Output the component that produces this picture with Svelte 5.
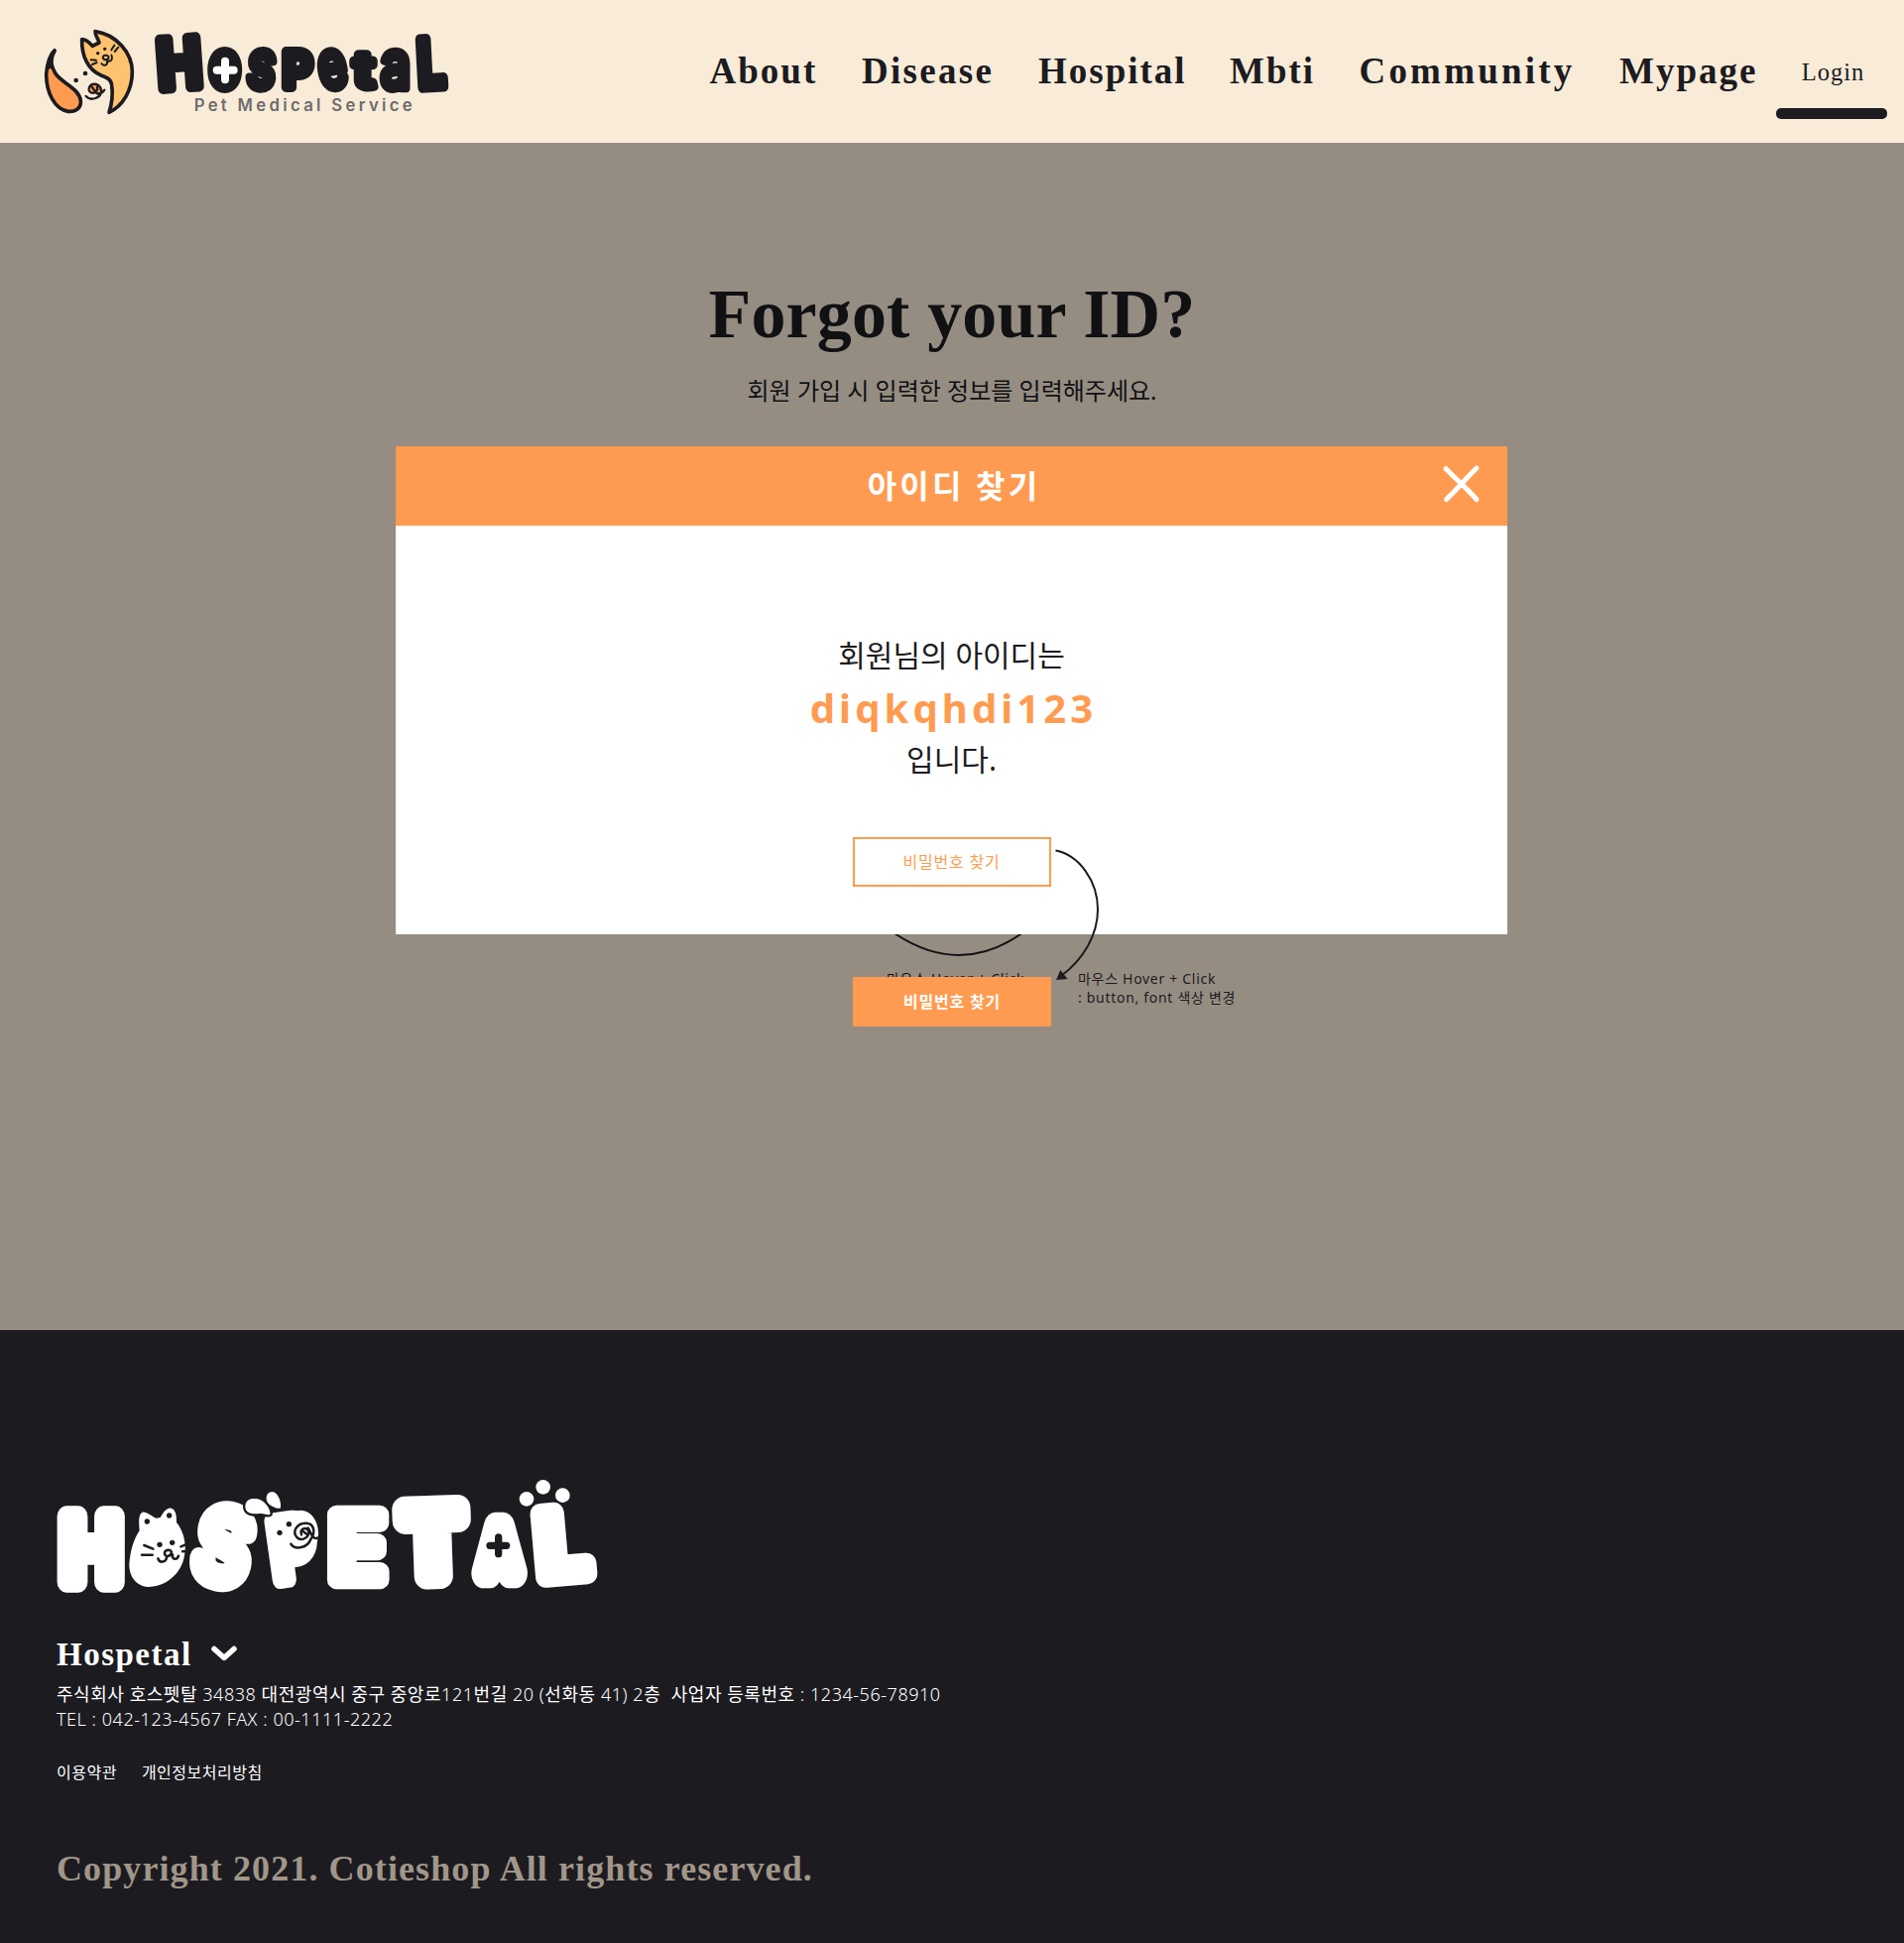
<script>
  const links = ['About', 'Disease', 'Hospital', 'Mbti', 'Community', 'Mypage'];

  // Wordmark letters: character, left edge, advance, baseline, size, weight, tilt, stroke
  const headerLetters = [
    { ch: 'H', x: 386, w: 134, y: 220, size: 203, weight: 700, tilt: -4, stroke: 33 },
    { ch: 'o', x: 543, w: 94, y: 220, size: 198, weight: 700, tilt: 0, stroke: 30 },
    { ch: 's', x: 660, w: 86, y: 221, size: 202, weight: 500, tilt: 6, stroke: 27 },
    { ch: 'P', x: 765, w: 90, y: 219, size: 150, weight: 600, tilt: 0, stroke: 30 },
    { ch: 'e', x: 870, w: 87, y: 221, size: 202, weight: 500, tilt: -10, stroke: 25 },
    { ch: 't', x: 981, w: 61, y: 218, size: 146, weight: 600, tilt: 0, stroke: 27 },
    { ch: 'a', x: 1061, w: 91, y: 221, size: 202, weight: 500, tilt: 0, stroke: 25 },
    { ch: 'L', x: 1173, w: 83, y: 218, size: 198, weight: 700, tilt: -3, stroke: 34 }
  ];
  const footerLetters = [
    { ch: 'H', x: 65, w: 180, y: 344, size: 274, weight: 700, tilt: 0, stroke: 64 },
    { ch: 'O', x: 300, w: 108, y: 330, size: 170, weight: 700, tilt: 8, stroke: 36 },
    { ch: 'S', x: 474, w: 164, y: 343, size: 292, weight: 500, tilt: 12, stroke: 58 },
    { ch: 'P', x: 700, w: 130, y: 334, size: 246, weight: 700, tilt: -8, stroke: 52 },
    { ch: 'E', x: 876, w: 170, y: 340, size: 274, weight: 500, tilt: 0, stroke: 56 },
    { ch: 'T', x: 1098, w: 180, y: 327, size: 280, weight: 700, tilt: -2, stroke: 80 },
    { ch: 'A', x: 1338, w: 106, y: 317, size: 190, weight: 600, tilt: 0, stroke: 92 },
    { ch: 'L', x: 1506, w: 152, y: 327, size: 266, weight: 700, tilt: -5, stroke: 62 }
  ];

  // Splits a line into Hangul and non-Hangul runs so each can carry its own weight
  const address =
    '주식회사 호스펫탈 34838 대전광역시 중구 중앙로121번길 20 (선화동 41) 2층\u00a0 사업자 등록번호 : 1234-56-78910';
  const runs = address.split(/([가-힣]+)/).filter(Boolean);
</script>

{#snippet lettering(items)}
  {#each items as l}
    <text
      x={l.x}
      y={l.y}
      font-size={l.size}
      font-weight={l.weight}
      textLength={l.w}
      lengthAdjust="spacingAndGlyphs"
      stroke-width={l.stroke}
      transform={`rotate(${l.tilt} ${l.x + l.w / 2} ${l.y - l.size * 0.35})`}>{l.ch}</text>
  {/each}
{/snippet}

<div class="page">
  <header>
    <svg class="logo" viewBox="0 0 1320 345" aria-label="Hospetal">
      <g class="mark">
        <path fill="#ff9b50" d="M75 108C62 132 62 152 78 178C96 206 150 222 154 260C156 286 134 294 116 292C76 286 50 236 50 180C52 150 60 124 75 108Z" />
        <path d="M75 108C62 130 62 142 64 156L54 160C58 130 66 116 75 108Z" />
        <path fill="#ffc370" d="M198 50C262 60 310 114 310 172C310 228 282 276 240 295C248 270 252 240 248 212C246 194 232 188 214 182C178 166 156 126 158 74C172 74 180 84 190 94L210 84C208 72 198 66 198 50Z" />
        <path class="line" d="M185 136L201 137M189 150L203 144M256 92L247 106M268 98L257 111M217 147C224 157 237 152 234 140C248 143 252 132 247 122" />
        <path class="line" d="M229 136C217 132 220 121 231 122C243 124 240 136 229 136" />
        <circle cx="206" cy="116" r="5" /><circle cx="227" cy="103" r="5" />
        <circle cx="168" cy="177" r="7" /><circle cx="140" cy="198" r="7" />
        <circle cx="197" cy="224" r="16" fill="#ff9b50" />
        <path class="curl" d="M170 246C184 262 218 252 216 228C213 202 176 204 179 228C184 244 208 234 204 218M188 218L203 238C212 240 220 236 226 227" />
      </g>
      <g class="dark letters">{@render lettering(headerLetters)}</g>
      <path class="plus" d="M591 140V196M566 167H617" />
      <text class="tagline" x="497" y="292" textLength="660">Pet Medical Service</text>
    </svg>
    <nav>
      {#each links as link}<a href="#top">{link}</a>{/each}
      <a class="login" href="#top">Login</a>
    </nav>
  </header>

  <main>
    <h1>Forgot your ID?</h1>
    <p class="lead">회원 가입 시 입력한 정보를 입력해주세요.</p>

    <svg class="back-arc" viewBox="0 0 140 40"><path d="M3 0L10.500 5Q75 47 136 5L142 0" /></svg>
    <p class="note behind">마우스 Hover + Click</p>

    <section class="modal">
      <div class="bar">
        <h2>아이디 찾기</h2>
        <button class="close" aria-label="닫기">
          <svg viewBox="0 0 40 40"><path d="M4 4.500L14 14.500L20 20L26 26L35 35.500M35 4L27 12L20 19.500L12 28L4.500 35.500" /></svg>
        </button>
      </div>
      <div class="body">
        <p>회원님의 아이디는</p>
        <strong>diqkqhdi123</strong>
        <p>입니다.</p>
        <button class="find">비밀번호 찾기</button>
      </div>
    </section>

    <button class="find hovered">비밀번호 찾기</button>
    <svg class="arrow" viewBox="0 0 60 150">
      <path class="curve" d="M4.500 7.500C28 12 47 38 47 67C47 92 33 117 10 134" />
      <path d="M9.300 128L5 138L16.500 137Z" />
    </svg>
    <p class="note side">마우스 Hover + Click<br />: button, font 색상 변경</p>
  </main>

  <footer>
    <svg class="wordmark" viewBox="0 0 1740 420" aria-label="Hospetal">
      <g class="light letters">{@render lettering(footerLetters)}</g>
      <g fill="#fff">
        <path d="M302 190C298 150 302 132 318 134C332 138 343 148 352 152L365 150C375 130 388 120 398 122C412 125 414 145 414 165C435 190 445 230 438 265C430 320 380 362 325 360C285 355 270 320 271 290C274 250 285 215 302 190Z" />
        <path class="ear" d="M622 118C622 95 640 90 660 94C685 100 700 130 697 140C690 145 680 136 665 138C640 142 622 135 622 118Z" />
        <path class="ear" d="M686 95C684 78 695 70 708 73C725 80 732 110 728 122C715 124 688 112 686 95Z" />
        <ellipse cx="790" cy="198" rx="53" ry="70" />
        <circle cx="1473" cy="94" r="22" /><circle cx="1523" cy="58" r="22" /><circle cx="1582" cy="83" r="22" />
      </g>
      <g class="face">
        <circle cx="325" cy="162" r="8" /><circle cx="392" cy="144" r="8" />
        <circle cx="363" cy="232" r="8" /><circle cx="401" cy="226" r="8" />
        <path d="M316 234L343 245M309 263H341M427 238L442 232M432 253L442 252" />
        <path d="M385 268C374 262 376 248 390 248C404 250 400 264 385 268C382 288 362 288 358 274M385 268L402 262C400 278 416 280 420 266" />
        <circle cx="754" cy="170" r="8" /><circle cx="726" cy="196" r="8" />
        <path d="M760 230C774 250 810 242 820 216C836 194 830 166 804 167C776 168 764 194 778 210C792 224 816 210 814 192C806 174 786 186 792 202M794 190L810 202M812 182L826 208C834 216 842 212 845 210" />
      </g>
      <path class="cross" d="M1388 210V260M1362 235H1412" />
    </svg>
    <div class="brand">
      <h3>Hospetal</h3>
      <svg viewBox="0 0 28 18"><path d="M4 4.500L14 13.500L24 4.500" /></svg>
    </div>
    <address>
      <p>{#each runs as run}<span class:ko={/[가-힣]/.test(run)}>{run}</span>{/each}</p>
      <p>TEL : 042-123-4567 FAX : 00-1111-2222</p>
    </address>
    <div class="policies"><a href="#top">이용약관</a><a href="#top">개인정보처리방침</a></div>
    <p class="copyright">Copyright 2021. Cotieshop All rights reserved.</p>
  </footer>
</div>

<style>
  :global(body) { margin: 0; }
  .page {
    width: 1920px;
    height: 1959px;
    overflow: hidden;
    display: flex;
    flex-direction: column;
    font-family: 'Noto Sans', 'Noto Sans CJK KR', sans-serif;
    color: #1c1b20;
  }
  h1, h2, h3, p { margin: 0; }
  a { color: inherit; text-decoration: none; }
  button { font: inherit; padding: 0; cursor: pointer; }
  svg { display: block; }

  header {
    height: 144px;
    flex: none;
    box-sizing: border-box;
    background: #f8ebd8;
    display: flex;
    justify-content: space-between;
    align-items: flex-start;
    padding-left: 30px;
  }
  .logo { width: 440px; height: 115px; margin-top: 15px; }
  .mark { fill: #1c1b20; }
  .mark path { stroke: #1c1b20; stroke-width: 11; stroke-linejoin: round; stroke-linecap: round; }
  .mark .line { fill: none; stroke-width: 6; }
  .mark .curl { fill: none; stroke-width: 7; }
  .letters {
    font-family: Inter, sans-serif;
    stroke-linejoin: round;
    stroke-linecap: round;
  }
  .dark { fill: #1c1b20; stroke: #1c1b20; }
  .light { fill: #fff; stroke: #fff; }
  .plus { stroke: #fff; stroke-width: 24; stroke-linecap: round; }
  .tagline { font: 600 50px Inter, sans-serif; fill: #6d6c6c; }

  nav {
    display: grid;
    grid-template-columns: 153.500px 178px 193px 130.500px 262.500px 158px 112px;
    margin: 52px 17px 0 0;
    font: 700 37px/40px 'Liberation Serif', serif;
    letter-spacing: 2px;
  }
  nav a:nth-child(2) { letter-spacing: 2.300px; }
  nav a:nth-child(5) { letter-spacing: 3.200px; }
  nav .login {
    font: 400 24.500px/30px 'Liberation Serif', serif;
    letter-spacing: 1px;
    text-align: center;
    text-indent: 3px;
    padding-top: 6px;
    display: flex;
    flex-direction: column;
  }
  .login::after {
    content: '';
    height: 11px;
    margin-top: 21px;
    border-radius: 5px;
    background: #1c1b20;
  }

  main {
    height: 1197px;
    flex: none;
    position: relative;
    background: #958d82;
    display: flex;
    flex-direction: column;
    align-items: center;
  }
  h1 {
    margin-top: 133px;
    font: 700 70px/80px 'Liberation Serif', serif;
    letter-spacing: 0.150px;
    color: #111013;
  }
  .lead { margin-top: 19px; font-size: 24px; line-height: 36px; color: #111013; }
  .modal {
    position: relative;
    width: 1121px;
    height: 492px;
    margin: 38px 1px 0 0;
    background: #fff;
  }
  .bar {
    height: 80px;
    background: #ff9b50;
    color: #fff;
    display: grid;
    grid-template-columns: 1fr auto 1fr;
    align-items: center;
  }
  h2 { grid-column: 2; margin-left: 5px; font-size: 32px; line-height: 48px; letter-spacing: 3.200px; font-weight: 700; }
  .close { justify-self: end; width: 40px; height: 40px; margin: -4px 26px 0 0; background: none; border: 0; }
  .close path { fill: none; stroke: #fff; stroke-width: 5; stroke-linecap: round; stroke-linejoin: round; }
  .body {
    padding-top: 110px;
    display: flex;
    flex-direction: column;
    align-items: center;
    font-size: 30px;
    line-height: 42px;
  }
  .body strong { margin: 3.500px 0 3px 4px; font-size: 40px; line-height: 56px; letter-spacing: 4.100px; color: #ff9b50; }
  .find {
    width: 200px;
    height: 50px;
    box-sizing: border-box;
    margin-top: 57px;
    border: 2px solid #ff9b50;
    background: #fff;
    color: #ff9b50;
    font-size: 16px;
    line-height: 24px;
    letter-spacing: 0.800px;
  }
  .hovered { margin-top: 43px; background: #ff9b50; color: #fff; font-weight: 700; position: relative; }
  .note { position: absolute; font-size: 14px; line-height: 19px; letter-spacing: 0.700px; }
  .behind { left: 894px; top: 833px; color: #111013; }
  .side { left: 1087px; top: 833px; }
  .back-arc { position: absolute; left: 893px; top: 793px; width: 140px; height: 40px; }
  .back-arc path { fill: none; stroke: #111013; stroke-width: 2; }
  .arrow { position: absolute; left: 1060px; top: 706px; width: 60px; height: 150px; fill: #1c1b20; }
  .curve { fill: none; stroke: #1c1b20; stroke-width: 2; }

  footer { flex: 1; background: #1c1b20; color: #fff; padding: 139px 57px 0; }
  .wordmark { width: 580px; height: 140px; margin-left: -17px; overflow: visible; }
  .ear { stroke: #1c1b20; stroke-width: 14; paint-order: stroke; }
  .face { fill: #1c1b20; }
  .face path { fill: none; stroke: #1c1b20; stroke-width: 7.500; stroke-linecap: round; stroke-linejoin: round; }
  .cross { stroke: #1c1b20; stroke-width: 22; stroke-linecap: round; }
  .brand { display: flex; align-items: center; margin-top: 28px; }
  h3 { font: 700 33px/40px 'Liberation Serif', serif; letter-spacing: 1.500px; }
  .brand svg { width: 28px; height: 18px; margin: -2px 0 0 18px; }
  .brand svg path { fill: none; stroke: #fff; stroke-width: 5.500; stroke-linecap: round; stroke-linejoin: round; }
  address { margin-top: 8px; font-style: normal; font-weight: 300; font-size: 18px; line-height: 25px; letter-spacing: 0.540px; white-space: nowrap; }
  .ko { font-weight: 400; }
  .policies { display: flex; gap: 25px; margin-top: 29px; font-size: 16px; line-height: 24px; letter-spacing: 0.500px; }
  .copyright { margin-top: 65px; font: 700 36px/40px 'Liberation Serif', serif; letter-spacing: 1.100px; color: #a19689; }
</style>
